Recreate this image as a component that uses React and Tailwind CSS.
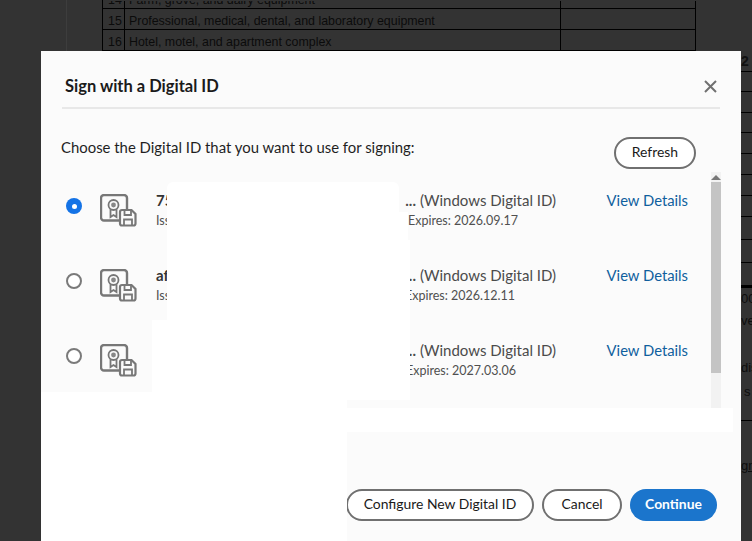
const digitalIds = [
  { id: "75", tail: "...", issuedWidth: "w-[252px]", expires: "2026.09.17", selected: true },
  { id: "af", tail: "...", issuedWidth: "w-[249px]", expires: "2026.12.11", selected: false },
  { id: "", tail: "...", issuedWidth: "w-[250px]", expires: "2027.03.06", selected: false },
];

const docRows = [
  { h: "h-[8px]", num: "14", label: "Farm, grove, and dairy equipment" },
  { h: "h-[21px]", num: "15", label: "Professional, medical, dental, and laboratory equipment" },
  { h: "h-[21px]", num: "16", label: "Hotel, motel, and apartment complex" },
];

const sideLines = ["h-[21px]", "h-[20px]", "h-[21px]", "h-[20px]", "h-[21px]", "h-[21px]", "h-[21px]", "h-[21px]", "h-[23px]", "h-[23px]", "h-[23px]"];

function CertIcon() {
  return (
    <svg width="37" height="33" viewBox="0 0 37 33" fill="none" className="shrink-0">
      <path d="M19 26.5H4a3 3 0 0 1-3-3V4a3 3 0 0 1 3-3h20a3 3 0 0 1 3 3v12" stroke="#777" strokeWidth="2.4" />
      <circle cx="13.5" cy="11" r="5" stroke="#777" strokeWidth="1.8" />
      <circle cx="13.5" cy="11" r="2.4" fill="#888" />
      <path d="M10.5 15.5v7.5l3-2 3 2v-7.5" stroke="#777" strokeWidth="1.8" />
      <path d="M20 18a2 2 0 0 1 2-2h9.5l4 4v9.5a2 2 0 0 1-2 2H22a2 2 0 0 1-2-2z" fill="#fafafa" stroke="#777" strokeWidth="2.2" />
      <path d="M24.5 16.5v4.5h6.5v-4.5M24 31V25.5h8V31" stroke="#777" strokeWidth="1.8" />
    </svg>
  );
}

function Radio({ selected }) {
  if (selected) {
    return (
      <span className="flex h-4 w-4 items-center justify-center rounded-full bg-[#1473e6]">
        <span className="block h-[5px] w-[5px] rounded-full bg-white" />
      </span>
    );
  }
  return <span className="block h-4 w-4 rounded-full border-2 border-[#7a7a7a] bg-white" />;
}

function IdRow({ item }) {
  return (
    <div className="flex h-[75px] items-start">
      <div className="mt-[26px] ml-[25px] shrink-0"><Radio selected={item.selected} /></div>
      <div className="mt-[22px] ml-[18px] shrink-0"><CertIcon /></div>
      <div className="mt-[18px] ml-[19px] w-[532px] shrink-0">
        <div className="flex h-[20px] items-center whitespace-nowrap text-[15px] text-[#4b4b4b]">
          <span className="flex w-[260px] justify-between">
            <span className="font-bold text-[#333]">{item.id}</span>
            <span className="font-bold">{item.tail}</span>
          </span>
          <span className="ml-[4px]">(Windows Digital ID)</span>
          <span className="ml-auto text-[14.8px] text-[#0f5f9e]">View Details</span>
        </div>
        <div className="mt-[2px] flex h-[19px] items-center whitespace-nowrap text-[12.5px] text-[#505050]">
          <span className={`${item.issuedWidth} overflow-hidden`}>Issued by:</span>
          <span>Expires: {item.expires}</span>
        </div>
      </div>
    </div>
  );
}

function Button({ children, className }) {
  return (
    <button className={`h-8 whitespace-nowrap rounded-full pb-[2px] text-[13.9px] ${className}`}>{children}</button>
  );
}

export default function App() {
  return (
    <div className="relative h-[541px] w-[752px] overflow-hidden bg-[#333333] font-['Lato','Open_Sans',sans-serif]">
      {/* document behind the dialog */}
      <div className="flex h-full">
        <div className="ml-[66px] h-[51px] w-[36px] border-l border-[#3d3d3d]" />
        <div className="flex h-[51px] w-[594px] flex-col justify-end border-l border-black">
          {docRows.map((row) => (
            <div key={row.num} className={`${row.h} flex overflow-hidden border-b border-black font-['Liberation_Sans',sans-serif] text-[12.4px] leading-[15px] text-[#0b0b0b]`}>
              <span className="flex h-full w-[22px] items-end border-r border-black pl-[5px]">{row.num}</span>
              <span className="flex h-full w-[436px] items-end border-r border-black pl-[4px]">{row.label}</span>
              <span className="h-full w-[135px] border-r border-black" />
            </div>
          ))}
        </div>
        <div className="ml-[45px] w-[11px] pt-[51px]">
          {sideLines.map((h, i) => (
            <div key={i} className={`${h} w-[11px] border-b border-black`} />
          ))}
          <div className="h-[2px] w-[11px] bg-black" />
        </div>
      </div>

      {/* text strip on the right */}
      <div className="absolute top-[51px] left-[741px] flex h-[21px] items-center overflow-hidden font-['Liberation_Sans',sans-serif] text-[14px] font-bold text-[#111]">2</div>
      <div className="absolute top-[291px] left-[741px] h-[200px] w-[11px] overflow-hidden font-['Liberation_Sans',sans-serif] text-[13px] leading-[15px] text-[#0d0d0d]">
        <div className="h-[22px]">00</div>
        <div className="h-[47px]">ve</div>
        <div className="h-[24px]">dis</div>
        <div className="h-[37px] border-b border-black pl-[3px]">s</div>
        <div className="mt-[37px] underline">gn</div>
      </div>

      {/* dialog */}
      <div className="absolute top-[51px] left-[41px] flex h-[490px] w-[700px] flex-col bg-[#fbfbfb]">
        <div className="mx-[21px] flex h-[58px] items-center justify-between border-b-2 border-[#e8e8e8] pt-[13px]">
          <h1 className="mt-[2px] ml-[3px] text-[16.5px] font-bold text-[#1a1a1a]">Sign with a Digital ID</h1>
          <svg width="13" height="13" viewBox="0 0 13 13" className="mt-[1px] mr-[3px]">
            <path d="M1 1l11 11M12 1L1 12" stroke="#707070" strokeWidth="2" />
          </svg>
        </div>

        <div className="mt-[28px] ml-[20px] flex h-[32px] w-[635px] justify-between">
          <p className="text-[14.9px] leading-[20px] text-[#1f1f1f]">Choose the Digital ID that you want to use for signing:</p>
          <Button className="w-[82px] border-2 border-[#707070] bg-white text-[#1a1a1a]">Refresh</Button>
        </div>

        <div className="mt-[3px] flex h-[236px]">
          <div className="w-[670px]">
            {digitalIds.map((item) => <IdRow key={item.expires} item={item} />)}
          </div>
          <div className="flex w-[10px] flex-col bg-[#f2f2f2]">
            <div className="flex h-[10px] items-center justify-center">
              <span className="block h-0 w-0 border-x-[5px] border-b-[5px] border-x-transparent border-b-[#777]" />
            </div>
            <div className="h-[191px] bg-[#c4c4c4]" />
          </div>
        </div>

        <div className="mt-[81px] mr-[24px] flex justify-end gap-2">
          <Button className="w-[188px] border-2 border-[#707070] bg-white text-[#1a1a1a]">Configure New Digital ID</Button>
          <Button className="w-[80px] border-2 border-[#707070] bg-white text-[#1a1a1a]">Cancel</Button>
          <Button className="w-[87px] bg-[#1b75cc] font-bold text-white">Continue</Button>
        </div>
      </div>

      {/* painted-out areas over the dialog */}
      <div className="absolute top-[182px] left-[167px] h-[130px] w-[232px] rounded-[6px] bg-white" />
      <div className="absolute top-[212px] left-[167px] h-[100px] w-[241px] bg-white" />
      <div className="absolute top-[240px] left-[167px] h-[160px] w-[243px] bg-white" />
      <div className="absolute top-[320px] left-[152px] h-[80px] w-[40px] bg-white" />
      <div className="absolute top-[392px] left-[41px] h-[149px] w-[306px] bg-white" />
      <div className="absolute top-[408px] left-[340px] h-[24px] w-[393px] bg-white" />
    </div>
  );
}
